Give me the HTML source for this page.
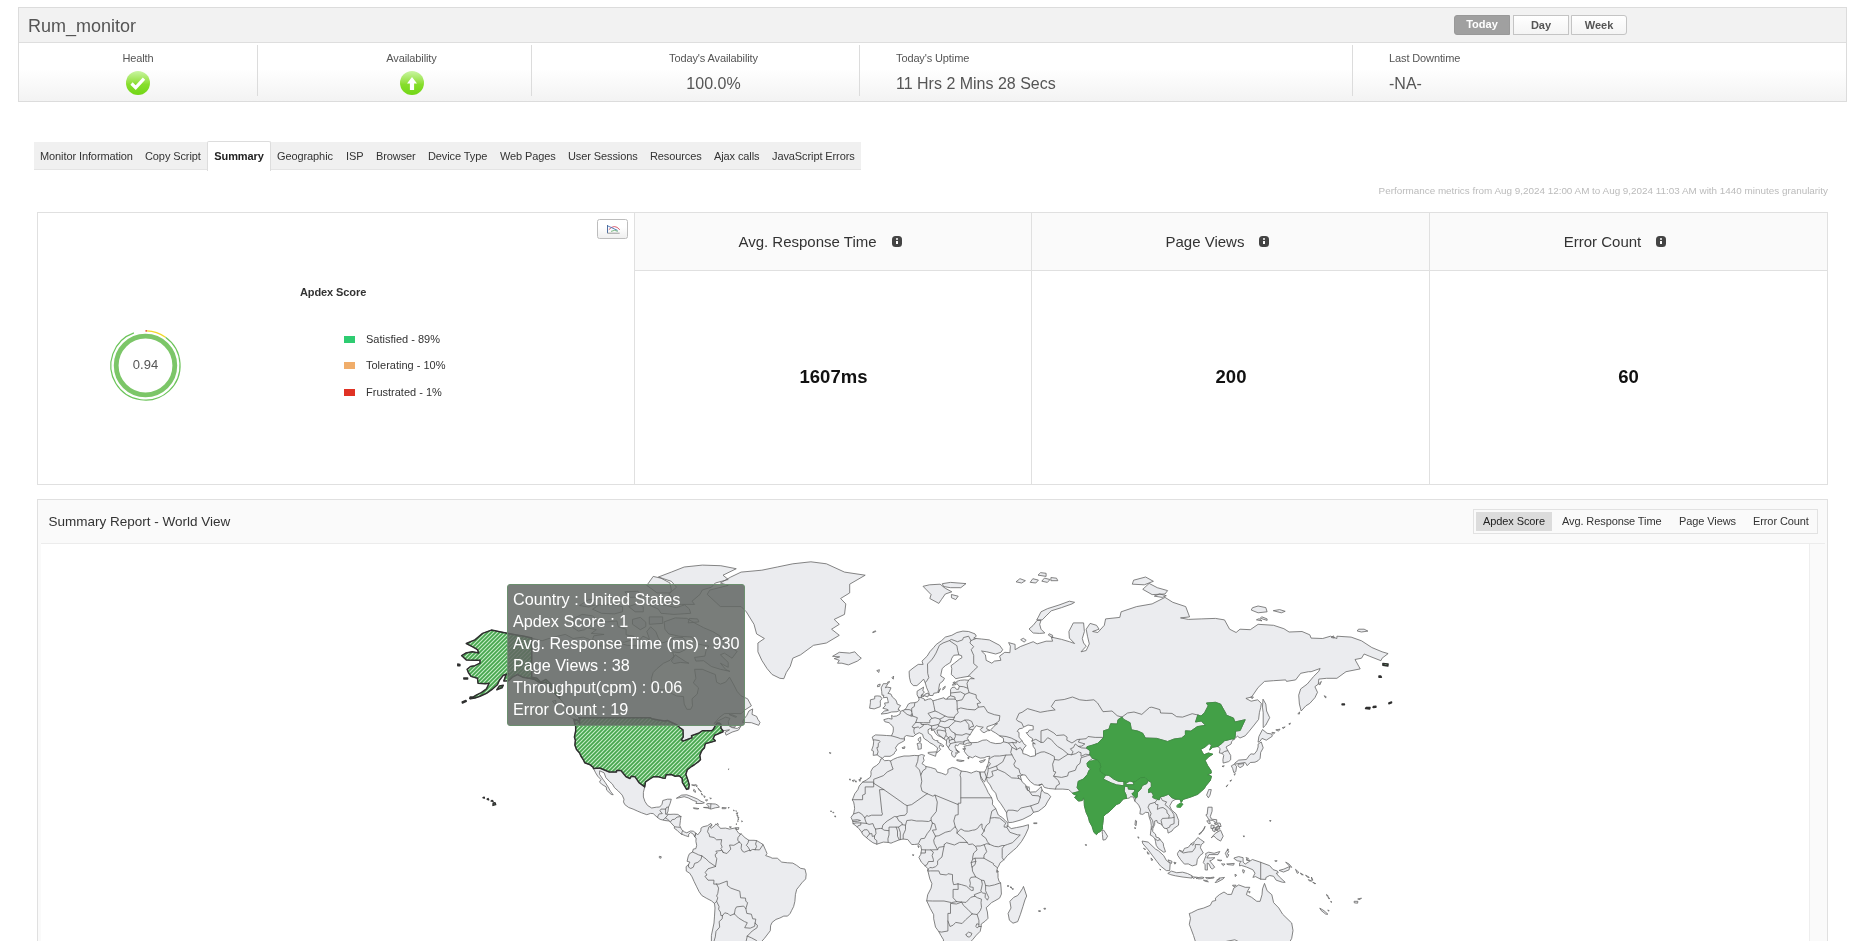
<!DOCTYPE html>
<html lang="en">
<head>
<meta charset="utf-8">
<title>Rum_monitor - Summary</title>
<style>
*{box-sizing:border-box;margin:0;padding:0}
html,body{width:1866px;height:941px;overflow:hidden;background:#fff}
body{font-family:"Liberation Sans",Arial,sans-serif;color:#333;position:relative;font-size:11px}
.abs{position:absolute}
/* top monitor panel */
#mon{left:18px;top:7px;width:1829px;height:95px;border:1px solid #dcdcdc;background:#fff}
#mon .bar{left:0;top:0;width:1827px;height:35px;background:#f2f2f2;border-bottom:1px solid #dedede}
#mon h1{left:9px;top:6px;font-size:18px;font-weight:400;color:#555;line-height:24px;white-space:nowrap}
#mon .stats{left:0;top:35px;width:1827px;height:58px;background:linear-gradient(#fff 0%,#fff 45%,#f3f3f3 100%)}
.stat{top:0;height:58px}
.stat .lb{position:absolute;top:8px;left:0;width:100%;font-size:11px;color:#555;line-height:14px;white-space:nowrap;letter-spacing:-.12px}
.stat .val{position:absolute;top:31px;left:0;width:100%;font-size:16px;color:#555;line-height:20px;white-space:nowrap}
.stat.c{text-align:center}
.vd{top:2px;width:1px;height:51px;background:#dcdcdc}
.btn{top:7px;height:20px;border:1px solid #c4c4c4;background:linear-gradient(#fff,#f4f4f4);font-size:11px;font-weight:700;color:#555;text-align:center;line-height:18px}
.btn.on{background:#a0a0a0;border-color:#999;color:#fff;border-radius:3px 0 0 3px;line-height:17px}
/* tabs */
#tabs{left:34px;top:142px;height:28px;width:827px;background:#f0f0f0;border-bottom:1px solid #e4e4e4}
#tabs span{position:absolute;top:0;height:28px;line-height:28px;font-size:11px;color:#333;white-space:nowrap;letter-spacing:-.1px}
#tabs span.act{background:#fff;border:1px solid #ddd;border-bottom:none;height:30px;top:-1px;font-weight:700;text-align:center;border-radius:2px 2px 0 0;color:#222}
#perf{right:38px;top:185px;font-size:9.9px;color:#bbb;white-space:nowrap;line-height:12px}
/* cards */
#cards{left:37px;top:212px;width:1791px;height:273px;border:1px solid #e0e0e0;background:#fff}
.card{top:0;height:271px;border-left:1px solid #e0e0e0}
.card .hd{position:absolute;left:0;top:0;width:100%;height:58px;background:#fafafa;border-bottom:1px solid #e0e0e0;font-size:15px;color:#333;line-height:58px;text-align:center;white-space:nowrap;padding-right:27px}
.card .num{position:absolute;left:0;top:152px;width:100%;text-align:center;font-size:18.5px;font-weight:700;color:#111;line-height:24px}
.info{display:inline-block;width:10px;height:11px;border-radius:3.5px;background:#444;vertical-align:middle;margin-left:15px;position:relative;top:-2px}
.info i{position:absolute;left:4px;top:2px;width:2px;height:2px;background:#fff;border-radius:1px}
.info b{position:absolute;left:4px;top:5px;width:2px;height:3.5px;background:#fff}
.lg{left:306px;font-size:11px;color:#333;white-space:nowrap;line-height:14px}
.lg i{display:inline-block;width:11px;height:7px;margin-right:11px;vertical-align:middle;position:relative;top:-1px}
/* world panel */
#world{left:37px;top:499px;width:1791px;height:460px;border:1px solid #e0e0e0;background:#fafafa}
#world .ttl{left:10.5px;top:14px;font-size:13.5px;color:#333;line-height:16px;white-space:nowrap}
#world .sep{left:3px;top:43px;width:1784px;height:1px;background:#ececec}
#world .chart{left:3px;top:44px;width:1769px;height:420px;background:#fff;border-right:1px solid #eee}
#tg{left:1435px;top:9px;width:345px;height:25px;border:1px solid #e2e2e2;background:#fafafa}
#tg span{position:absolute;top:2px;height:19px;line-height:19px;font-size:11px;color:#333;white-space:nowrap;text-align:center;letter-spacing:-.1px}
#tg span.on{background:#dcdcdc;color:#222}
#map{left:0;top:0;width:1866px;height:941px}
#tip{left:507px;top:584px;width:238px;height:142px;background:rgba(97,102,99,.85);border:1px solid #6b8f6e;border-radius:3px;color:#fff;font-size:16.2px;line-height:22px;padding:3px 5px 5px;white-space:nowrap}
</style>
</head>
<body>
<div id="root" style="position:absolute;left:0;top:0;width:1866px;height:941px;will-change:transform">
<div id="mon" class="abs">
  <div class="bar abs"></div>
  <h1 class="abs">Rum_monitor</h1>
  <div class="btn on abs" style="left:1435px;width:56px">Today</div>
  <div class="btn abs" style="left:1494px;width:56px">Day</div>
  <div class="btn abs" style="left:1552px;width:56px;border-radius:0 3px 3px 0">Week</div>
  <div class="stats abs">
    <div class="stat c abs" style="left:0;width:238px"><div class="lb">Health</div>
      <svg class="abs" style="left:106px;top:26.5px" width="26" height="26" viewBox="0 0 26 26"><defs><linearGradient id="gg" x1="0" y1="0" x2="0" y2="1"><stop offset="0" stop-color="#c9f5a2"/><stop offset=".5" stop-color="#92e03c"/><stop offset=".55" stop-color="#86de2c"/><stop offset="1" stop-color="#72d615"/></linearGradient></defs><circle cx="13" cy="13" r="12" fill="url(#gg)"/><path d="M6.5 13.5l4.2 4.2 8.3-9" fill="none" stroke="#fff" stroke-width="3.2"/></svg></div>
    <div class="vd abs" style="left:238px"></div>
    <div class="stat c abs" style="left:256px;width:273px"><div class="lb">Availability</div>
      <svg class="abs" style="left:124px;top:26.5px" width="26" height="26" viewBox="0 0 26 26"><circle cx="13" cy="13" r="12" fill="url(#gg)"/><path d="M13 7l5 6.5h-2.9v6.5h-4.2v-6.5H8z" fill="#fff"/></svg></div>
    <div class="vd abs" style="left:512px"></div>
    <div class="stat c abs" style="left:531px;width:327px"><div class="lb">Today's Availability</div><div class="val">100.0%</div></div>
    <div class="vd abs" style="left:840px"></div>
    <div class="stat abs" style="left:877px;width:400px"><div class="lb">Today's Uptime</div><div class="val">11 Hrs 2 Mins 28 Secs</div></div>
    <div class="vd abs" style="left:1333px"></div>
    <div class="stat abs" style="left:1370px;width:300px"><div class="lb">Last Downtime</div><div class="val">-NA-</div></div>
  </div>
</div>

<div id="tabs" class="abs">
  <span style="left:6px">Monitor Information</span>
  <span style="left:111px">Copy Script</span>
  <span class="act" style="left:173px;width:64px">Summary</span>
  <span style="left:243px">Geographic</span>
  <span style="left:312px">ISP</span>
  <span style="left:342px">Browser</span>
  <span style="left:394px">Device Type</span>
  <span style="left:466px">Web Pages</span>
  <span style="left:534px">User Sessions</span>
  <span style="left:616px">Resources</span>
  <span style="left:680px">Ajax calls</span>
  <span style="left:738px">JavaScript Errors</span>
</div>
<div id="perf" class="abs">Performance metrics from Aug 9,2024 12:00 AM to Aug 9,2024 11:03 AM with 1440 minutes granularity</div>

<div id="cards" class="abs">
  <div class="abs" style="left:559px;top:6px;width:31px;height:20px;border:1px solid #bdbdbd;border-radius:2.5px;background:linear-gradient(#fff 40%,#efefef)">
    <svg class="abs" style="left:9px;top:5px;overflow:visible" width="14" height="10" viewBox="0 0 14 10"><path d="M0.5 0v8.2" fill="none" stroke="#3b5f94" stroke-width="1" opacity=".9"/><path d="M0.5 8.2h12.2" fill="none" stroke="#9a9a9a" stroke-width="1"/><path d="M1.8 4.7Q7.4 -1.6 12.8 4.7" fill="none" stroke="#d0435b" stroke-width="1" opacity=".85"/><path d="M1 1L10.5 5.4" fill="none" stroke="#3f6fb5" stroke-width="1" opacity=".85"/><path d="M4 6.4Q7.8 4.2 10.8 6.4" fill="none" stroke="#3e9a4b" stroke-width=".8" opacity=".85"/></svg>
  </div>
  <div class="abs" style="left:262px;top:72px;letter-spacing:-.1px;font-size:11px;font-weight:700;color:#333;line-height:14px;white-space:nowrap">Apdex Score</div>
  <svg class="abs" style="left:60.7px;top:106.7px" width="92" height="92" viewBox="0 0 92 92">
    <circle cx="46.5" cy="45.5" r="29.3" fill="none" stroke="#7cc668" stroke-width="4.8"/>
    <path d="M34.9 12.9A34.6 34.6 0 1 0 66.5 17.3" fill="none" stroke="#6cc45a" stroke-width="1.2"/>
    <path d="M47.7 10.9A34.6 34.6 0 0 1 66.5 17.3" fill="none" stroke="#f0d92c" stroke-width="1.4"/>
    <path d="M46.5 10.9l1.4 0" fill="none" stroke="#e0563a" stroke-width="1.6"/>
    <text x="46.5" y="49.3" text-anchor="middle" font-size="13" fill="#555" font-family="Liberation Sans, Arial, sans-serif">0.94</text>
  </svg>
  <div class="lg abs" style="top:119px"><i style="background:#2ecc71"></i>Satisfied - 89%</div>
  <div class="lg abs" style="top:145px"><i style="background:#f0ad6a"></i>Tolerating - 10%</div>
  <div class="lg abs" style="top:172px"><i style="background:#e03224"></i>Frustrated - 1%</div>

  <div class="card abs" style="left:596px;width:398px"><div class="hd">Avg. Response Time<span class="info"><i></i><b></b></span></div><div class="num">1607ms</div></div>
  <div class="card abs" style="left:993px;width:399px"><div class="hd">Page Views<span class="info"><i></i><b></b></span></div><div class="num">200</div></div>
  <div class="card abs" style="left:1391px;width:398px"><div class="hd">Error Count<span class="info"><i></i><b></b></span></div><div class="num">60</div></div>
</div>

<div id="world" class="abs">
  <div class="ttl abs">Summary Report - World View</div>
  <div id="tg" class="abs">
    <span class="on" style="left:2px;width:76px">Apdex Score</span>
    <span style="left:88px">Avg. Response Time</span>
    <span style="left:205px">Page Views</span>
    <span style="left:279px">Error Count</span>
  </div>
  <div class="sep abs"></div>
  <div class="chart abs"></div>
</div>

<svg id="map" class="abs" viewBox="0 0 1866 941">
  <defs>
    <pattern id="hatch" width="4" height="4" patternUnits="userSpaceOnUse">
      <rect width="4" height="4" fill="#c6edc8"/>
      <path d="M-1,1l2,-2M0,4l4,-4M3,5l2,-2" stroke="#47a64e" stroke-width="1.75" fill="none"/>
    </pattern>
    <clipPath id="mc"><rect x="41" y="544" width="1769" height="400"/></clipPath>
  </defs>
  <g clip-path="url(#mc)" stroke-linejoin="round" stroke-linecap="round">
    <path d="M531.7,638.1L524.0,636.2L513.6,634.4L503.3,632.5L491.4,630.1L482.6,633.4L474.9,639.9L466.3,643.5L472.3,646.6L477.5,649.7L478.7,653.1L472.3,651.8L465.8,653.1L461.7,655.7L466.3,659.9L474.9,660.3L480.0,660.3L480.0,663.2L474.9,665.7L470.5,666.5L467.1,669.3L468.4,672.5L471.0,676.4L477.5,678.3L478.0,683.3L485.2,683.7L489.1,683.3L486.5,688.9L481.3,692.6L476.2,695.2L470.2,698.8L474.9,698.0L480.0,696.2L486.5,693.3L491.7,689.7L497.4,684.8L499.4,680.3L503.3,675.2L508.5,673.7L505.9,675.2L503.8,681.0L508.5,680.7L512.4,677.2L517.5,674.5L522.7,677.2L529.2,678.3L534.8,679.5L540.8,683.3L546.0,682.2L549.8,686.0L553.7,691.5L556.3,695.2L559.4,698.0L562.8,702.3L565.9,706.8L567.9,711.0L573.6,713.4L577.7,716.7L578.8,717.7L579.6,719.4L579.6,723.3L578.3,720.4L573.9,719.7L575.7,726.6L575.7,730.8L574.4,737.1L575.4,740.2L574.9,745.1L576.5,749.4L579.6,753.0L580.9,756.0L583.4,759.8L584.7,762.8L590.2,764.8L593.0,767.1L593.5,768.6L595.6,772.8L597.7,776.2L601.0,779.6L599.5,781.9L601.5,784.1L606.2,786.9L606.7,790.2L611.1,794.3L613.2,794.8L610.6,791.5L608.0,786.9L605.4,782.7L602.8,779.1L599.5,774.3L599.7,770.8L604.1,772.8L605.9,777.7L609.3,781.3L612.4,784.1L614.5,787.7L618.3,791.0L622.2,795.1L624.0,799.2L623.5,801.9L624.8,804.6L628.7,807.5L633.1,809.1L637.7,811.2L641.6,812.8L646.8,814.7L650.6,813.4L653.2,813.6L657.6,817.6L660.2,819.4L664.9,820.5L669.3,821.0L670.5,822.3L674.4,826.5L674.4,828.4L677.0,830.2L680.1,833.3L682.2,834.4L685.5,835.7L688.6,836.7L688.6,834.4L690.7,832.5L693.5,834.4L694.8,837.0L696.1,833.3L693.3,831.2L690.4,831.0L686.8,832.8L684.2,831.8L681.7,829.7L679.8,825.7L680.4,820.5L680.9,816.5L677.8,814.4L673.9,814.2L670.0,814.4L666.7,814.2L668.0,811.2L668.5,807.2L670.0,803.8L671.3,799.2L667.4,799.2L662.8,800.5L662.0,804.3L659.7,807.0L656.3,807.2L651.7,808.0L647.5,805.4L645.0,801.6L643.4,797.0L643.4,792.4L644.7,786.9L645.5,781.9L650.6,778.5L653.2,776.8L658.4,776.8L662.3,777.9L665.1,778.2L666.1,774.8L671.3,774.5L675.2,776.2L679.1,775.7L682.2,778.5L682.4,782.4L684.8,786.3L686.6,789.4L688.6,788.8L689.2,784.7L687.9,780.2L685.8,774.3L687.3,769.7L691.5,766.5L694.6,764.5L697.9,762.2L700.5,759.8L699.8,755.4L701.0,752.4L702.3,750.0L704.4,747.9L704.9,744.8L705.7,743.6L711.4,742.1L715.3,740.8L713.2,738.4L714.7,735.2L717.8,734.0L723.0,731.7L723.0,730.8L729.5,729.8L725.1,732.4L726.1,735.2L732.1,732.1L738.5,730.1L741.1,725.9L737.2,728.5L732.1,727.6L729.0,725.9L728.2,721.7L730.0,718.4L725.6,717.1L717.8,721.0L714.0,723.7L719.1,717.7L724.3,713.7L730.8,713.4L741.1,713.7L745.0,709.9L751.4,705.8L747.6,698.8L741.1,695.9L737.2,691.5L733.4,684.1L729.5,677.2L725.6,682.2L720.4,684.1L716.6,682.2L715.3,674.5L710.1,672.5L702.3,669.3L694.6,669.3L695.9,678.3L693.3,682.9L698.5,687.8L697.2,694.1L692.0,698.8L692.5,705.8L690.7,709.3L686.8,709.3L684.2,704.1L683.5,696.6L676.5,695.9L671.3,693.3L663.6,689.7L656.3,689.7L651.9,682.9L651.4,678.3L653.2,672.5L657.1,668.5L663.6,663.2L670.0,660.3L673.9,656.1L672.6,651.8L679.1,652.7L685.5,649.7L684.2,645.3L686.1,641.2L683.0,637.6L675.2,637.1L668.7,640.8L662.3,643.0L658.4,638.1L655.8,631.5L650.6,626.8L646.8,631.5L649.3,638.5L648.1,644.4L642.9,646.2L627.4,645.3L617.0,642.6L617.0,647.5L611.9,645.7L598.9,646.2L601.5,644.4L593.8,641.2L583.4,637.1L573.1,638.5L565.3,634.4L557.6,636.2L547.2,639.0L542.1,640.8L531.7,638.1ZM696.1,833.3L697.7,834.9L700.8,831.0L701.0,828.1L702.9,826.8L707.5,825.7L710.9,823.4L711.9,825.2L710.4,827.1L711.1,828.4L714.7,825.7L715.8,823.9L719.1,826.5L720.4,828.4L725.6,828.1L729.5,829.1L735.9,827.8L736.5,830.2L739.0,833.6L741.6,834.4L745.0,837.7L748.9,840.3L754.0,840.3L756.6,840.6L760.5,842.9L763.1,844.5L765.7,850.4L767.0,853.5L765.7,855.6L770.8,857.4L772.1,858.2L777.3,858.2L781.7,862.1L787.6,862.8L792.8,863.1L796.7,865.4L800.6,868.3L805.0,869.1L806.2,874.2L805.7,878.9L801.9,882.8L799.3,886.2L796.7,889.4L795.4,894.7L794.9,901.3L793.6,906.6L791.5,910.7L790.2,913.4L787.6,916.1L783.8,916.1L779.9,918.0L776.0,919.4L772.1,922.4L770.6,925.7L770.3,930.7L767.0,935.0L764.4,938.4L761.3,941.8L758.2,946.1L755.3,949.3L750.9,949.6L745.5,947.0L745.2,948.7L748.3,952.8L749.6,955.2L747.6,958.8L735.9,961.8L735.2,966.4L728.2,967.9L732.1,972.5L728.2,975.7L726.9,980.4L721.7,983.6L726.1,988.5L720.4,996.8L717.8,1001.9L719.1,1005.4L712.7,1010.0L704.9,1003.7L701.0,991.8L704.9,983.6L707.5,971.0L705.7,963.3L706.2,956.4L708.8,951.4L711.4,944.1L711.4,935.5L714.0,923.0L714.5,916.1L715.0,908.0L714.5,903.4L711.4,900.8L706.2,898.1L701.8,895.5L699.0,891.5L696.7,886.8L694.1,881.5L692.0,876.8L689.7,873.2L686.3,871.1L686.1,866.7L688.6,864.4L689.9,862.1L687.1,861.3L688.1,856.9L689.4,853.8L692.5,852.0L693.3,849.1L695.9,848.6L696.7,845.3L695.9,841.4L696.1,838.0L694.8,837.0ZM980.5,776.0L981.0,779.1L983.6,783.3L986.2,788.2L988.2,792.6L991.6,797.8L992.6,801.1L992.4,804.3L995.7,808.6L998.3,815.0L1002.7,817.9L1005.8,821.3L1007.6,822.6L1008.1,824.7L1006.8,825.7L1008.1,826.0L1011.2,828.6L1016.4,827.6L1022.9,826.3L1028.5,824.7L1028.3,828.4L1025.4,834.9L1021.6,841.4L1016.4,847.8L1013.3,850.4L1007.3,855.6L1003.7,860.0L1000.1,862.8L998.6,866.2L997.5,867.8L996.5,871.9L998.0,873.7L998.0,877.6L999.1,881.5L1000.6,882.8L1001.1,888.1L1001.4,894.1L999.6,898.1L994.9,900.8L991.6,902.6L988.0,906.1L986.2,907.7L987.4,912.0L988.0,918.3L985.4,921.0L981.2,924.1L981.2,926.5L980.2,931.3L976.3,935.2L972.5,939.8L968.6,943.8L964.7,946.4L962.6,947.0L956.9,947.3L947.9,949.3L944.0,947.9L943.2,943.2L943.5,939.8L940.9,935.5L938.8,931.6L935.5,927.1L933.7,918.8L933.7,914.7L930.3,908.5L926.7,900.8L927.7,894.7L931.1,888.1L931.9,883.6L929.8,878.9L928.0,871.4L927.7,868.5L925.2,865.9L921.3,862.1L918.9,857.4L920.8,854.3L921.5,849.7L920.8,845.8L918.9,844.0L914.3,844.5L911.7,844.5L907.8,839.6L903.2,839.0L899.3,839.8L893.6,842.1L891.0,843.2L888.2,842.4L883.3,842.1L876.8,844.2L872.9,842.7L868.3,839.3L866.5,837.7L862.6,834.4L861.8,832.3L858.7,828.4L857.4,827.1L853.0,823.6L852.8,821.3L851.0,817.3L853.6,813.9L854.6,808.6L854.3,805.4L853.6,801.9L852.3,800.0L854.8,793.7L857.9,789.6L859.2,786.0L862.6,782.1L866.5,779.9L870.4,777.1L871.1,774.3L870.9,771.4L872.9,767.7L876.6,765.4L879.4,762.8L880.9,758.9L882.5,758.7L884.6,760.7L888.4,760.4L890.5,761.0L893.6,759.2L897.5,757.5L904.0,756.0L909.1,756.0L914.3,755.4L918.4,755.7L921.5,754.5L924.6,755.4L923.3,757.8L924.1,760.4L922.0,763.6L924.6,765.4L925.9,766.5L930.3,767.4L935.7,769.1L937.0,772.0L941.4,773.1L945.8,774.8L947.9,772.8L947.9,769.4L952.3,767.4L956.2,768.3L961.3,771.1L966.8,771.7L971.2,773.1L973.7,772.0L976.3,771.1L979.7,772.0ZM882.2,758.1L879.9,756.9L877.1,754.8L873.2,755.4L873.5,751.2L871.6,750.3L873.2,745.8L873.7,741.8L873.2,739.9L872.2,737.1L875.5,734.9L882.0,735.2L886.4,735.5L891.5,735.8L893.1,732.1L893.4,728.9L893.1,726.9L890.5,724.0L889.0,722.7L884.8,721.7L883.8,719.7L888.4,718.4L892.1,719.1L891.5,715.4L893.4,716.4L896.5,716.0L900.1,714.0L900.3,711.3L902.7,710.6L905.0,709.6L906.5,707.5L908.3,704.1L910.4,703.0L914.3,702.7L917.1,702.0L918.4,700.9L919.2,699.1L918.4,697.3L917.1,694.8L917.1,691.2L920.8,688.9L923.6,687.1L922.8,690.8L924.4,691.9L922.6,694.1L921.3,696.2L921.5,697.7L924.4,699.1L924.6,700.5L928.5,699.1L931.1,698.8L932.9,700.9L937.6,699.5L944.0,697.7L944.8,699.1L947.1,699.1L947.9,697.3L950.5,695.9L950.7,693.0L950.5,689.7L952.0,687.5L954.6,687.1L956.4,689.3L958.5,689.3L959.3,686.3L956.9,683.7L956.7,681.4L960.3,680.3L964.7,679.9L968.6,680.3L969.9,678.7L974.3,678.7L971.2,677.6L969.9,676.0L968.1,676.4L960.8,677.6L955.7,678.7L953.6,676.4L951.3,674.5L951.8,668.5L951.0,665.7L954.4,663.2L959.5,659.1L961.9,657.8L961.6,655.7L958.8,654.8L953.8,655.3L951.8,658.2L950.5,662.4L945.3,665.7L942.2,668.5L940.9,674.5L940.7,676.0L944.5,678.3L943.0,681.0L939.6,683.7L938.6,689.7L937.6,692.6L933.7,693.3L932.9,695.5L929.5,695.5L928.8,692.6L926.7,687.8L925.2,682.6L923.6,679.1L920.8,682.2L916.9,685.6L913.3,685.6L910.7,682.6L909.4,677.2L909.1,671.3L913.0,668.1L918.2,664.4L923.1,664.4L922.0,661.1L927.2,656.1L929.8,651.8L933.7,647.5L936.3,644.4L941.4,640.8L945.3,637.1L951.8,635.3L956.9,632.5L962.9,631.1L968.6,631.5L975.0,633.9L976.3,636.2L973.7,638.1L976.1,638.5L981.5,639.0L989.3,639.9L999.6,645.3L1002.7,649.7L1000.9,652.3L995.7,654.0L986.7,651.8L981.5,651.0L985.4,654.8L986.2,660.3L991.8,663.2L994.4,661.1L1000.9,660.3L999.6,656.1L1004.8,652.3L1009.9,652.7L1010.4,646.2L1008.6,642.6L1015.1,644.4L1015.1,649.7L1020.3,646.6L1033.2,641.7L1037.1,643.9L1046.1,641.2L1052.6,641.2L1051.3,637.1L1061.6,639.4L1069.4,641.7L1074.6,643.5L1069.4,638.1L1068.9,631.5L1073.3,622.9L1083.6,622.9L1084.4,631.5L1082.3,638.5L1083.6,643.0L1086.2,646.2L1081.0,651.8L1086.2,650.5L1089.3,643.9L1087.5,636.2L1086.2,629.2L1090.1,623.4L1096.5,625.3L1099.1,629.2L1092.6,631.5L1097.8,632.5L1104.3,625.3L1105.6,618.9L1119.8,617.4L1121.1,611.8L1136.6,606.6L1152.1,603.9L1165.0,597.4L1172.8,602.3L1185.7,606.6L1189.6,616.9L1180.5,617.9L1188.3,619.4L1201.2,618.9L1215.4,618.4L1224.5,619.9L1229.6,629.2L1236.1,632.5L1240.0,629.2L1250.3,629.7L1258.1,624.3L1273.6,625.3L1283.9,628.7L1289.1,632.0L1302.0,631.5L1309.8,634.8L1311.1,638.1L1322.7,638.5L1330.5,636.2L1336.9,638.5L1336.9,636.2L1351.1,637.1L1361.5,640.8L1371.8,647.5L1382.1,651.8L1388.1,653.6L1382.1,658.2L1380.9,660.7L1369.2,656.1L1364.1,654.0L1361.5,658.2L1355.0,659.5L1358.9,666.5L1360.2,668.9L1346.0,671.7L1336.9,678.3L1326.6,678.3L1318.8,679.1L1318.3,684.1L1314.9,686.7L1317.5,692.3L1314.9,697.7L1309.8,703.4L1305.9,705.8L1301.2,711.0L1299.4,704.1L1298.7,695.2L1300.7,688.9L1307.2,684.1L1313.7,676.4L1318.8,671.3L1320.1,668.5L1311.1,671.7L1308.5,671.7L1300.7,673.3L1295.6,679.9L1286.5,681.4L1285.7,679.9L1273.6,680.7L1264.5,681.4L1258.1,687.5L1251.6,697.0L1245.9,698.4L1251.1,701.2L1257.6,699.8L1261.4,703.4L1260.7,707.5L1259.4,712.7L1258.6,719.4L1254.2,725.0L1249.0,731.4L1245.2,735.8L1240.0,738.0L1237.4,736.2L1234.0,739.3L1231.5,741.8L1231.2,743.9L1226.0,747.0L1227.8,750.6L1230.7,755.4L1230.7,759.8L1228.6,761.6L1223.2,763.1L1222.9,759.8L1223.7,755.4L1222.1,753.3L1219.3,753.0L1220.1,748.5L1217.8,746.4L1212.8,747.3L1209.7,750.0L1211.5,744.8L1209.0,743.6L1205.1,747.0L1200.7,749.4L1202.5,752.4L1203.8,754.8L1208.4,753.0L1212.8,754.2L1209.0,756.6L1205.1,760.4L1207.7,765.7L1211.0,770.6L1211.3,773.1L1207.7,774.8L1211.5,776.2L1210.3,780.5L1206.4,785.2L1203.8,789.1L1201.2,791.3L1197.8,794.3L1191.6,796.7L1188.3,797.8L1183.1,799.4L1181.3,802.4L1179.8,799.2L1175.9,799.2L1172.3,801.1L1169.7,805.9L1171.5,809.9L1176.1,813.9L1178.7,820.5L1178.5,825.2L1173.6,828.6L1172.0,831.0L1168.1,833.1L1167.6,829.7L1166.3,828.6L1164.0,828.1L1162.4,825.7L1162.2,825.2L1160.6,823.9L1157.3,822.6L1157.0,820.5L1154.7,821.0L1154.7,824.4L1152.9,828.4L1152.6,831.5L1155.5,834.1L1156.0,837.0L1159.1,838.0L1160.1,839.6L1163.2,843.2L1163.7,846.5L1165.5,851.7L1163.7,852.2L1158.3,848.4L1156.2,845.3L1155.5,841.6L1154.9,838.8L1152.6,836.2L1150.3,835.1L1150.8,831.0L1151.1,829.7L1151.3,825.7L1150.8,821.8L1149.0,816.5L1148.5,812.6L1145.6,812.3L1142.8,814.4L1139.9,813.9L1140.5,809.1L1138.7,805.1L1136.3,802.4L1134.8,801.1L1133.5,797.0L1130.4,796.7L1129.4,798.1L1126.5,798.4L1123.7,798.9L1121.1,801.3L1119.8,803.2L1116.4,804.6L1113.3,807.8L1108.9,812.0L1105.6,814.2L1103.5,816.5L1103.2,820.5L1102.5,825.7L1102.5,828.9L1100.4,831.5L1098.3,832.5L1096.5,834.6L1093.9,832.3L1092.1,826.5L1089.5,821.8L1088.3,817.1L1086.2,812.6L1084.4,805.9L1084.1,800.5L1083.6,797.8L1082.3,800.5L1078.4,801.1L1074.6,797.3L1077.1,795.6L1073.8,794.3L1072.5,793.2L1070.2,791.0L1068.6,789.6L1062.9,789.1L1055.4,789.1L1048.7,788.5L1044.3,787.4L1042.2,784.1L1037.8,785.2L1034.5,784.7L1030.6,781.9L1027.5,778.2L1025.4,775.1L1022.6,774.8L1020.3,776.0L1021.3,779.9L1022.3,782.1L1025.7,784.9L1026.0,788.0L1027.5,790.2L1027.5,788.0L1028.8,786.6L1029.6,789.1L1028.8,790.7L1030.6,792.1L1035.8,791.8L1039.7,788.2L1041.2,786.6L1042.0,789.9L1044.1,792.6L1047.9,793.7L1050.8,796.5L1047.4,801.9L1045.3,805.9L1041.7,808.8L1038.4,811.2L1033.5,812.3L1031.1,815.0L1022.9,819.2L1019.0,820.5L1012.5,822.3L1008.6,822.6L1007.9,821.0L1006.8,816.0L1006.6,812.8L1004.0,808.6L1000.9,803.8L997.5,799.4L995.7,793.2L992.4,789.6L990.0,784.9L987.2,781.3L986.4,777.1L985.1,780.7L984.6,781.9L983.1,780.5L980.5,776.0L979.7,772.0L984.6,772.0L986.4,768.6L986.9,766.8L988.2,763.6L989.0,759.8L989.3,757.8L989.8,756.3L986.7,756.6L984.1,757.8L980.2,758.1L975.3,756.0L972.5,757.8L968.6,756.3L966.8,754.8L964.2,751.2L965.5,748.5L963.9,746.4L967.3,745.5L971.2,744.8L971.4,742.7L977.6,742.4L982.8,740.2L986.7,739.9L990.5,742.4L995.7,743.6L1000.9,743.3L1003.5,741.8L1003.5,738.4L999.6,735.8L995.7,733.0L991.8,730.8L990.8,729.5L993.1,727.6L995.2,725.0L997.5,723.7L994.9,724.0L991.3,725.3L987.2,726.6L986.7,728.9L990.3,730.5L987.4,730.8L984.1,732.7L982.5,732.1L980.2,729.5L983.3,727.2L978.9,726.6L976.3,725.6L973.0,729.8L970.1,734.6L968.3,736.5L967.3,738.7L968.6,740.2L969.1,741.8L971.2,742.7L967.3,743.3L964.7,744.5L963.4,744.2L959.5,743.6L957.7,745.8L955.7,744.8L954.9,747.0L956.4,749.4L958.2,751.8L957.7,753.3L955.7,752.7L956.2,754.2L955.1,756.9L954.1,757.2L952.3,756.0L951.3,753.0L952.5,751.5L949.7,750.0L948.4,747.6L946.3,744.8L946.6,740.8L944.0,739.0L941.4,737.1L937.6,735.5L935.5,733.3L933.7,730.1L931.4,730.5L931.6,728.9L930.1,728.5L928.0,729.8L928.3,733.3L931.4,735.5L932.9,739.0L935.5,740.5L938.1,740.8L937.6,742.1L941.4,743.9L944.0,746.1L942.7,746.7L940.1,744.8L939.1,747.3L940.7,749.4L938.8,751.2L936.8,752.7L937.0,750.6L937.6,747.9L935.7,746.4L933.4,744.5L929.8,742.7L927.7,740.8L924.6,739.0L923.3,737.1L922.6,734.3L919.2,732.7L915.6,734.6L913.3,736.5L910.2,736.2L906.5,735.5L904.2,737.1L904.5,739.0L904.5,740.5L901.9,742.1L898.3,743.9L895.4,747.9L896.7,750.0L894.6,752.4L894.4,753.6L891.3,755.7L890.0,756.3L884.8,756.3ZM729.5,671.3L720.4,669.3L711.4,666.5L703.6,660.7L695.9,661.1L694.6,657.4L704.9,656.1L706.2,649.7L708.8,646.2L697.2,643.9L692.0,637.1L679.1,636.2L668.7,633.9L664.9,629.2L664.1,621.9L675.2,617.9L686.8,618.4L694.6,622.9L703.6,627.7L712.7,631.5L720.4,636.2L723.0,640.8L730.8,647.5L737.2,651.4L732.1,658.2L724.3,653.1L720.4,654.8L728.2,662.4L728.2,667.3L720.4,663.2L725.6,669.3ZM624.8,642.1L633.8,639.4L633.8,636.2L626.1,634.8L626.1,629.2L618.3,626.8L617.0,620.9L606.7,621.9L598.9,619.4L589.9,624.3L588.6,628.2L596.4,629.7L591.2,633.4L604.1,634.4L593.8,635.8L592.5,639.4L596.4,640.8L602.8,642.1L614.5,642.1ZM573.1,627.7L578.3,631.1L584.7,629.7L591.2,624.3L597.7,620.4L592.5,615.9L582.1,614.4L574.4,617.9L571.8,624.3ZM735.9,568.9L723.0,575.2L728.2,579.5L715.3,583.0L711.4,587.2L702.3,590.0L699.8,594.6L692.0,601.2L694.6,604.4L681.7,604.4L664.9,603.9L673.9,598.5L668.7,594.0L676.5,587.2L671.3,581.3L658.4,577.0L671.3,572.1L684.2,567.0L702.3,565.1L720.4,565.7ZM670.0,592.9L657.1,592.9L646.8,585.4L653.2,576.4L661.0,578.2L670.0,583.0L671.3,590.0ZM689.4,609.2L690.7,613.3L673.9,614.4L661.0,613.3L658.4,609.2L646.8,603.9L663.6,605.0L676.5,607.6L684.2,605.0ZM622.2,611.8L614.5,613.9L601.5,613.3L592.5,609.2L598.9,605.0L611.9,604.4L622.2,606.6ZM642.9,611.8L635.1,611.8L628.7,606.6L637.7,603.4L642.9,606.6ZM645.5,626.8L640.3,629.7L632.5,624.3L632.5,619.4L640.3,617.4L645.5,621.9ZM662.3,623.4L649.3,624.3L649.3,616.9L662.3,616.9ZM648.1,642.1L639.0,640.8L642.9,636.2L648.1,638.5ZM688.6,663.2L680.4,662.4L673.9,663.6L671.3,661.1L675.2,654.8L679.1,657.4L685.5,661.6ZM596.4,604.4L588.6,607.1L579.6,605.5L588.6,599.6L596.4,599.0ZM640.3,596.8L630.0,597.4L624.8,591.8L637.7,591.2ZM698.5,621.9L688.1,622.9L689.4,618.4L697.2,618.9ZM742.9,722.4L751.4,722.7L758.7,725.3L760.0,722.4L757.9,719.4L756.6,716.4L752.0,714.4L752.7,708.9L748.9,711.0L746.8,715.4L743.7,719.4ZM729.5,714.7L735.9,717.4L736.7,716.7L732.1,714.7ZM730.3,725.3L735.4,726.3L734.6,727.6L730.8,726.6ZM577.2,719.7L571.8,718.1L564.8,712.0L567.9,711.7L573.1,714.4L576.5,717.7ZM557.1,706.8L552.4,701.2L555.8,700.5L555.8,704.1ZM676.7,798.1L681.7,795.1L686.8,794.8L692.0,796.7L697.2,798.9L701.0,801.3L704.4,802.7L702.3,803.5L695.9,803.5L696.7,801.6L693.3,800.5L688.1,797.8L684.2,796.7L680.4,797.5ZM703.9,807.5L707.5,808.0L710.9,809.1L715.3,807.8L719.4,807.2L717.8,805.1L715.3,804.0L710.9,803.8L707.5,803.5L706.5,804.0L708.3,805.9L709.1,807.0ZM693.8,807.8L699.0,808.6L697.4,809.1L694.1,808.6ZM722.5,807.5L726.4,807.8L725.6,808.7L722.5,808.7ZM694.1,789.6L695.4,790.7L695.4,792.4L693.8,791.3ZM692.0,784.9L695.1,784.9L694.8,785.5ZM695.9,784.7L697.2,785.5L696.7,786.9L696.1,786.0ZM705.7,800.0L707.5,799.7L707.0,800.8ZM736.2,827.8L738.8,827.6L738.5,829.4L736.2,829.4ZM707.5,594.6L720.4,606.6L741.1,606.6L746.3,611.8L754.0,624.3L756.6,633.9L764.4,638.5L757.9,643.0L757.9,651.8L761.8,660.3L767.0,668.5L772.1,674.5L779.9,678.3L783.8,678.7L786.3,672.5L790.2,666.5L792.8,658.2L800.6,654.8L813.5,645.3L826.4,643.0L839.3,635.3L831.6,629.2L839.3,624.3L834.2,619.4L844.5,614.4L845.8,603.9L840.6,598.5L849.7,592.9L849.7,584.2L865.2,575.2L844.5,572.1L826.4,563.8L810.9,561.8L792.8,563.8L777.3,567.0L761.8,570.2L741.1,572.1L730.8,577.0L720.4,583.0L728.2,585.4L710.1,590.0ZM832.9,656.1L839.3,652.3L849.7,653.1L854.8,651.8L858.7,656.1L861.3,658.2L857.4,661.1L848.4,664.9L841.9,663.2L837.5,663.2L839.3,660.3L834.2,658.6L839.3,657.0ZM736.5,813.1L738.0,812.8L737.2,814.0ZM737.2,815.0L737.9,815.2L737.6,816.0ZM738.0,816.9L738.9,817.3L738.5,818.1ZM738.4,819.0L738.8,819.4L738.4,819.8ZM742.0,821.0L742.5,821.4L742.1,821.7ZM736.6,823.9L737.0,824.2L736.6,824.4ZM736.2,810.8L736.7,811.0L736.5,811.2ZM733.7,810.2L734.4,810.6L734.1,810.7ZM728.4,807.6L729.2,807.5L729.0,807.8ZM737.9,820.9L738.3,821.2L738.0,821.4ZM717.6,823.5L718.5,824.3L718.1,824.3ZM729.7,826.9L731.3,826.8L731.0,827.3ZM710.1,798.1L711.4,798.4L710.9,798.6ZM701.6,793.5L702.6,794.8L702.3,795.0ZM697.9,788.2L699.2,789.4L699.4,790.5L699.0,789.4ZM704.1,795.9L705.2,796.5L704.7,797.3ZM700.5,790.7L701.4,791.8L701.0,791.8ZM728.6,769.0L729.1,769.0L728.8,769.3ZM659.7,856.4L661.2,856.6L661.0,858.2L659.7,857.9ZM1023.6,886.8L1026.7,896.0L1024.9,900.0L1022.9,906.6L1020.3,914.7L1017.7,921.6L1013.0,923.2L1009.4,920.2L1008.1,913.4L1011.0,908.0L1009.9,901.3L1013.8,897.3L1017.7,895.5L1020.3,892.0L1022.3,888.9ZM1034.0,822.9L1037.1,822.9L1036.8,823.6L1034.2,823.6ZM1038.9,910.7L1040.4,910.7L1040.4,911.5L1039.1,911.5ZM1044.3,908.3L1045.6,908.3L1045.3,909.3L1044.3,909.1ZM1007.9,885.5L1008.6,885.5L1008.6,886.5L1007.9,886.5ZM1010.4,887.0L1011.5,887.0L1011.5,887.8ZM1012.5,888.6L1013.3,888.6L1013.0,889.4ZM852.5,780.5L854.6,779.9L853.6,781.3ZM855.4,781.0L856.4,781.0L856.1,781.9ZM859.2,779.6L860.5,779.3L860.0,781.0ZM860.5,777.9L861.6,777.9L861.0,778.8ZM849.7,779.1L850.4,779.1L850.2,779.9ZM834.9,816.0L835.7,816.0L835.5,816.8ZM830.8,811.0L831.6,811.0L831.3,811.5ZM833.1,812.3L833.9,812.3L833.6,812.8ZM913.0,854.6L913.8,854.8L913.3,855.6ZM918.2,845.8L919.2,846.0L918.7,847.3ZM997.5,870.6L998.3,871.1L998.0,872.2ZM829.5,752.7L831.1,753.0L830.5,753.3ZM881.5,714.0L887.2,713.4L891.5,712.0L897.0,711.7L899.8,710.3L898.0,709.3L900.6,705.5L897.2,704.1L896.7,702.0L895.7,699.8L892.3,697.0L891.0,694.1L887.9,693.3L889.2,691.9L891.0,687.8L887.2,687.1L885.3,687.8L887.9,683.7L883.3,683.7L881.2,687.8L881.7,691.5L882.0,695.2L883.8,695.2L883.3,697.7L887.2,697.3L887.9,700.5L888.4,702.7L884.6,703.0L885.3,705.8L882.8,708.2L887.9,709.6L888.4,710.3L884.6,711.0ZM879.9,706.8L874.2,708.9L869.6,708.2L870.4,702.7L870.4,699.8L874.7,698.8L874.7,696.2L877.3,695.9L880.4,696.2L882.0,698.8L880.2,700.9L880.4,703.4ZM928.5,752.4L936.5,751.8L935.5,756.3L928.5,753.6ZM917.4,743.6L920.0,742.7L921.3,743.6L921.3,748.8L919.5,749.1L918.2,749.4L917.9,746.4ZM918.7,738.4L920.5,737.1L920.8,740.2L920.0,742.1L918.4,740.5ZM957.2,759.8L959.5,760.1L964.2,760.7L960.8,761.6L957.2,760.7ZM979.7,761.3L982.8,760.4L985.4,759.5L983.8,761.6L981.0,762.5ZM902.4,747.6L905.0,746.7L904.5,748.5L902.9,748.5ZM924.9,695.9L927.7,697.0L928.8,694.4L928.0,693.0L925.2,694.1ZM921.5,696.2L923.9,696.6L923.9,695.2L922.0,694.8ZM943.0,689.7L944.8,688.2L945.3,686.3L943.5,687.5ZM938.6,692.6L939.9,689.7L940.4,688.6L939.1,690.8ZM952.8,685.2L956.2,684.5L955.1,683.3L953.1,684.1ZM953.3,682.9L955.7,682.9L955.1,681.8L953.8,682.2ZM968.1,757.5L969.1,757.2L968.6,758.7ZM956.2,749.7L959.5,752.1L958.8,752.4L956.4,750.6ZM963.1,748.8L965.0,748.5L964.4,749.4ZM877.1,670.5L879.4,669.7L878.9,672.1ZM892.1,677.6L893.6,676.0L893.4,678.7ZM887.7,682.2L889.5,681.4L889.0,682.8ZM878.1,684.8L880.2,684.1L879.7,686.3L877.8,686.7ZM872.9,632.0L875.5,630.8L875.8,631.5L873.2,632.5ZM923.3,586.6L931.1,594.6L929.8,598.5L938.8,603.4L941.4,599.6L945.3,594.0L951.8,591.8L945.3,588.3L940.1,584.2L929.8,584.8ZM942.7,583.6L950.5,582.4L966.0,583.6L960.8,587.7L950.5,587.7L944.0,586.6ZM951.8,594.6L958.2,596.2L955.7,599.6L951.8,597.9ZM1029.3,629.2L1033.2,633.0L1039.7,633.4L1044.8,633.0L1041.0,629.2L1039.7,624.3L1041.0,620.4L1037.1,620.4L1033.2,625.3ZM1037.1,619.9L1042.2,619.9L1046.1,615.9L1051.3,610.8L1061.6,607.6L1072.0,603.9L1074.6,602.3L1069.4,601.2L1059.0,605.0L1047.4,608.7L1041.0,611.8L1038.4,616.9ZM1021.0,639.9L1024.1,642.1L1026.2,640.3L1023.6,638.5ZM1048.7,635.3L1052.6,637.6L1052.6,635.3L1049.5,633.9ZM1016.4,581.9L1021.6,583.0L1025.4,580.7L1020.3,578.8ZM1030.6,582.4L1035.8,583.0L1038.4,580.1L1033.2,578.8ZM1042.2,581.3L1047.4,582.4L1050.0,579.5L1044.8,578.2ZM1051.3,580.7L1057.8,580.7L1056.5,578.2L1051.3,577.6ZM1038.4,575.2L1046.1,576.4L1046.1,573.3L1041.0,572.7ZM1143.1,589.5L1152.1,594.6L1165.0,594.0L1167.6,590.6L1157.3,587.7L1149.5,583.6ZM1132.7,584.2L1144.3,584.8L1153.4,581.3L1145.6,577.0L1134.0,580.1ZM1154.7,596.2L1162.4,597.4L1166.3,595.7L1159.9,594.0ZM1251.6,610.2L1258.1,612.8L1267.1,611.8L1265.8,607.6L1258.1,606.0L1252.9,607.6ZM1260.7,618.4L1267.1,620.4L1267.1,618.9L1262.0,616.9ZM1273.6,610.8L1281.3,612.8L1285.2,611.3L1280.0,609.7ZM1256.8,619.9L1262.0,620.9L1259.4,618.9ZM1357.6,631.1L1361.5,632.0L1367.9,631.1L1364.1,629.2L1358.9,629.2ZM1331.7,637.6L1334.3,638.1L1333.6,636.2ZM1318.8,683.7L1321.4,681.4L1320.1,684.5ZM1251.1,697.0L1253.4,697.0L1252.4,698.4ZM1324.5,695.9L1326.1,696.6L1325.8,697.7ZM1263.2,699.5L1265.8,704.1L1266.6,711.0L1269.7,717.7L1265.8,725.0L1263.2,727.6L1263.2,721.0L1263.2,712.7L1262.5,707.5ZM1258.1,741.8L1258.9,736.5L1262.5,729.5L1267.1,733.3L1271.8,734.0L1272.3,736.2L1266.3,740.2L1262.0,738.4L1260.1,741.1ZM1261.4,742.4L1263.2,747.9L1260.7,752.4L1260.1,758.4L1258.1,760.7L1255.0,762.2L1250.3,762.5L1247.2,765.7L1245.2,762.5L1240.0,763.3L1234.8,764.2L1234.8,763.1L1238.7,760.1L1246.4,759.5L1249.8,754.8L1251.1,753.9L1254.2,754.2L1256.8,750.9L1258.1,747.0L1258.1,744.5ZM1234.6,764.5L1236.6,766.2L1235.8,771.7L1233.8,772.6L1232.7,768.6L1231.5,766.2ZM1238.7,764.2L1243.9,763.6L1243.3,765.7L1240.0,767.7L1238.2,766.0ZM1272.3,732.4L1274.9,732.7L1273.6,734.0ZM1276.2,729.8L1280.0,729.2L1278.8,730.8ZM1282.6,727.6L1285.2,726.9L1283.9,728.2ZM1289.1,723.7L1290.4,723.0L1289.9,724.3ZM1298.1,713.4L1299.7,712.0L1299.4,713.7ZM1226.3,786.6L1227.8,784.7L1227.1,786.0ZM1230.2,780.7L1231.5,779.9L1230.9,781.0ZM1234.3,774.5L1235.1,773.4L1234.8,774.8ZM1222.4,766.2L1224.2,765.7L1223.7,766.5ZM1209.0,789.6L1211.3,789.6L1210.0,795.1L1208.4,797.8L1206.6,795.1L1208.2,791.0ZM1102.5,830.5L1103.8,830.2L1107.6,836.2L1105.6,839.6L1103.0,840.1L1102.5,834.9ZM1135.8,820.5L1136.6,821.0L1136.1,825.7L1135.3,825.2ZM1135.0,827.6L1135.6,827.8L1135.3,828.6ZM1138.1,837.0L1138.9,837.2L1138.7,838.0ZM1085.7,844.5L1086.4,844.5L1086.2,845.5ZM1026.5,786.3L1027.3,786.3L1027.0,787.4ZM1039.1,785.2L1041.7,784.1L1041.5,784.4L1039.4,785.5ZM1207.2,813.9L1207.9,807.2L1212.1,807.2L1212.1,811.2L1210.3,816.5L1211.5,819.2L1216.7,819.7L1216.7,823.1L1212.8,820.5L1209.0,820.0L1207.9,817.9L1206.1,815.2ZM1211.5,837.5L1215.4,833.3L1220.6,830.2L1223.2,836.2L1220.6,841.1L1216.7,838.8L1214.1,836.2ZM1217.5,823.1L1220.1,823.1L1221.1,826.5L1219.3,826.5ZM1217.8,826.0L1219.3,826.5L1219.8,829.1L1218.8,829.1ZM1212.6,828.4L1215.4,827.3L1214.9,831.8L1213.1,831.0ZM1211.5,825.0L1214.4,825.7L1213.1,828.4L1211.3,828.4ZM1215.4,829.7L1216.7,826.5L1217.0,828.4ZM1207.2,820.8L1209.5,820.8L1210.3,823.6L1209.0,823.6ZM1199.1,833.8L1202.5,831.0L1205.1,826.3L1204.3,828.9L1200.2,834.1ZM1216.2,829.9L1218.0,829.4L1217.8,830.7ZM1214.7,823.1L1216.7,824.4L1215.7,824.7ZM1177.7,853.0L1179.5,850.4L1183.1,851.5L1184.4,848.4L1188.3,847.3L1190.9,844.0L1194.7,841.4L1197.8,837.5L1200.4,839.3L1204.3,842.1L1201.2,844.7L1200.4,847.8L1203.3,853.0L1199.9,855.6L1197.3,859.5L1196.6,864.7L1192.2,865.9L1188.3,863.9L1184.4,864.1L1180.5,859.5L1177.9,855.6ZM1142.5,841.1L1148.2,842.1L1155.5,849.1L1158.6,850.9L1163.7,855.6L1166.3,860.3L1170.2,863.4L1169.7,870.6L1166.3,870.6L1160.4,865.9L1156.8,861.3L1152.1,855.1L1148.2,849.9L1143.1,844.0ZM1168.1,873.2L1171.5,871.1L1176.7,872.7L1182.6,872.2L1187.5,873.5L1192.2,875.8L1191.9,878.1L1183.1,877.1L1175.4,875.8L1171.2,874.8ZM1192.2,876.8L1195.3,877.1L1194.0,878.4ZM1195.8,877.1L1197.8,877.4L1197.1,878.7ZM1198.1,877.6L1202.0,877.1L1204.1,877.6L1202.2,878.7L1198.6,878.9ZM1205.9,877.6L1210.3,877.6L1214.1,877.1L1213.6,878.1L1207.7,878.7ZM1203.8,880.2L1206.9,880.5L1208.4,881.8L1205.9,881.5ZM1215.4,882.3L1219.3,878.1L1224.5,877.4L1223.2,878.9L1218.0,881.8ZM1205.9,853.5L1208.7,852.2L1214.1,853.3L1219.8,851.5L1218.0,854.6L1209.0,854.6L1206.9,857.9L1210.3,857.9L1214.9,857.7L1211.5,860.3L1209.7,860.8L1212.8,864.7L1214.7,867.2L1212.1,869.1L1210.8,868.0L1209.0,863.9L1207.2,863.1L1207.4,870.1L1205.1,869.8L1205.1,864.7L1203.3,862.6L1205.9,855.9ZM1225.5,853.0L1227.1,850.2L1228.9,851.7L1227.1,853.8L1228.9,854.8L1227.1,857.7L1226.3,855.6ZM1227.1,863.9L1234.3,863.4L1233.5,865.2L1228.4,864.7ZM1221.9,863.9L1225.0,864.1L1223.7,865.4ZM1168.4,860.0L1172.0,861.3L1171.5,863.4L1169.7,862.6ZM1174.3,862.3L1176.1,862.8L1175.1,863.9ZM1147.4,852.0L1149.3,853.8L1148.2,854.0ZM1151.3,858.2L1152.9,860.0L1151.8,860.3ZM1143.8,848.4L1145.6,849.4L1144.9,849.4ZM1160.1,869.3L1160.9,869.8L1160.4,869.8ZM1243.1,869.8L1244.6,870.6L1243.6,873.2L1242.8,871.6ZM1235.3,874.5L1236.6,875.0L1235.6,876.3ZM1246.4,857.7L1248.5,858.4L1247.7,859.0ZM1246.4,859.7L1249.8,860.3L1248.3,860.5ZM1227.6,849.1L1228.6,849.4L1228.1,850.4ZM1217.8,860.0L1221.9,860.3L1220.6,860.8ZM1234.3,857.9L1238.7,856.6L1243.1,857.7L1243.1,862.1L1245.2,864.1L1252.4,859.5L1260.7,862.3L1269.7,865.7L1273.1,869.6L1277.5,871.1L1278.2,872.9L1276.2,873.2L1279.3,876.8L1285.2,882.3L1282.6,882.3L1276.2,880.2L1273.6,876.3L1269.7,875.5L1265.8,877.6L1265.8,879.4L1260.7,879.2L1255.5,876.6L1252.9,877.4L1255.0,873.2L1252.9,869.8L1246.4,867.0L1241.3,865.4L1239.5,865.9L1239.7,862.8L1241.3,861.5L1237.4,860.8L1234.8,859.2ZM1279.5,870.3L1283.9,869.1L1289.6,866.5L1289.1,869.8L1283.9,871.9ZM1286.0,862.3L1289.1,864.1L1291.7,867.2L1290.9,867.5L1287.8,864.4ZM1295.8,869.6L1298.9,872.4L1297.6,873.2ZM1275.1,860.8L1277.2,860.8L1276.2,861.3ZM1300.7,873.2L1303.3,874.8L1302.0,874.8ZM1305.9,875.3L1309.3,877.4L1308.0,877.4ZM1308.7,879.7L1311.8,881.0L1309.8,881.0ZM1311.6,877.4L1312.9,880.2L1312.4,880.2ZM1313.1,882.3L1315.7,883.6L1314.4,883.6ZM1326.8,894.7L1328.4,896.2L1327.4,896.2ZM1328.4,897.3L1329.9,898.6L1328.9,898.6ZM1331.0,901.6L1332.0,902.1L1331.2,902.1ZM1320.1,908.3L1324.0,910.7L1327.9,914.2L1325.8,914.2L1321.4,910.7ZM1354.5,901.3L1357.9,901.3L1357.6,903.2L1354.7,902.9ZM1358.1,898.9L1361.5,898.1L1360.2,899.4ZM1328.4,910.1L1329.2,910.9L1328.4,910.9ZM1270.0,820.5L1271.0,820.5L1270.5,821.3ZM1243.6,835.9L1244.4,835.9L1244.1,836.7ZM1189.6,913.4L1191.4,912.8L1197.8,909.6L1203.8,908.0L1210.3,905.3L1212.3,901.3L1215.7,900.5L1215.4,898.1L1219.3,894.7L1224.0,892.0L1227.6,894.4L1231.5,894.4L1233.8,888.1L1238.7,884.9L1245.2,887.3L1249.8,887.3L1247.7,890.7L1246.4,894.7L1251.6,897.3L1256.8,901.3L1260.1,901.3L1262.0,894.7L1262.5,888.9L1264.5,883.4L1267.1,890.7L1271.8,894.7L1273.6,902.6L1278.8,908.0L1282.6,914.2L1286.0,917.5L1291.7,923.0L1293.0,930.5L1291.7,938.4L1287.3,946.4L1283.9,957.3L1274.9,961.8L1269.7,959.4L1259.4,958.8L1252.9,951.7L1247.7,949.3L1246.4,949.0L1242.6,943.5L1234.8,939.8L1227.1,941.2L1216.7,944.1L1206.4,947.0L1200.7,950.2L1193.7,947.9L1195.3,941.2L1193.5,935.5L1190.9,928.5L1189.3,924.3L1190.4,918.8ZM1233.0,885.2L1236.1,885.2L1234.8,886.5L1233.3,886.2ZM1249.0,891.5L1250.3,892.0L1249.5,892.8Z" fill="#ebecef" stroke="#666" stroke-width="0.8"/>
    <path d="M1024.1,726.9L1028.0,725.0L1033.2,725.9L1033.2,729.8L1029.3,730.1L1028.0,732.4L1026.2,732.7L1029.3,736.5L1032.7,738.7L1031.9,741.5L1035.3,743.9L1032.7,743.3L1033.2,746.4L1035.3,749.4L1035.5,754.5L1035.5,755.7L1030.6,756.6L1026.2,754.5L1022.9,753.6L1022.6,751.2L1023.4,748.8L1026.2,745.5L1024.1,744.2L1021.8,740.5L1019.0,737.1L1019.0,732.4L1017.2,731.4L1019.0,728.9L1022.1,728.2Z" fill="#fff" stroke="#666" stroke-width="0.8"/>
    <path d="M657.6,817.6L657.9,816.0L659.2,813.9L662.3,813.6L659.9,810.7L661.0,809.1L665.6,809.1M665.6,809.1L666.7,807.2L668.5,807.2M665.6,809.1L665.6,814.2L666.4,814.2M668.0,814.7L665.4,817.9L663.3,819.7M665.4,817.9L667.4,819.2L669.3,820.8M670.5,821.8L672.1,819.7L674.7,819.2L677.0,817.1L681.1,816.5M674.7,826.8L677.3,827.1L679.8,827.3M681.9,834.6L681.9,832.3L682.7,830.7M710.9,803.8L710.6,808.6M559.4,698.0L560.2,693.3L555.0,689.7L551.1,684.1L546.0,679.5L540.8,682.2L536.9,678.3L531.7,677.2L531.7,638.1M578.8,717.7L650.1,717.7L651.7,718.7L658.4,720.0L664.9,721.0L667.4,720.4L677.0,725.0L680.4,728.2L683.0,729.8L683.2,737.1L681.4,739.6L683.0,741.1L692.0,737.7L691.5,735.8L698.5,733.3L702.3,730.8L711.4,730.8L713.2,729.5L715.3,725.9L717.3,723.0L719.7,723.3L720.9,724.3L720.9,728.2L723.0,730.8M593.5,768.6L599.7,768.0L609.3,772.0L616.5,772.0L616.5,770.6L620.9,770.6L626.1,776.8L630.0,778.5L631.3,776.2L635.1,776.8L639.0,782.7L644.7,786.9M711.9,825.0L708.8,827.1L707.5,831.8L709.1,834.1L709.6,836.7L714.0,837.5L716.6,839.8L721.7,839.6L720.9,844.0L722.2,847.1L720.9,848.4L723.3,852.5M723.3,852.5L721.7,850.4L715.8,851.2L717.3,853.0L715.3,854.3L715.3,856.1L716.8,858.7L715.5,866.5M715.5,866.5L714.0,865.4L708.8,861.8L706.2,859.0L701.8,855.9M701.8,855.9L698.5,854.8L695.9,853.5L692.5,852.0M701.8,855.9L701.0,859.5L697.9,862.3L694.6,863.4L693.3,867.2L690.7,868.5L688.4,867.0L688.6,864.4M715.5,866.5L708.0,868.8L705.2,872.4L707.0,875.0L704.9,876.3L708.0,880.2L714.0,880.2L713.7,884.1L716.6,884.1M716.6,884.1L718.6,888.1L717.8,893.3L716.6,896.0L717.8,897.8L716.6,901.3L714.5,903.4M716.6,884.1L719.1,884.1L727.2,881.0L727.4,885.5L730.8,888.1L735.9,889.9L739.8,891.2L740.6,897.8L745.5,898.1L745.8,901.3L747.6,902.6L746.3,907.4L745.8,908.5M745.8,908.5L743.7,906.1L736.5,906.9L735.2,909.3L734.4,913.9M734.4,913.9L730.0,915.6L728.2,913.7L724.8,912.8L722.5,915.6M716.6,901.3L719.1,906.6L718.6,909.3L720.4,912.0L720.9,915.6L722.5,915.6M722.5,915.6L722.2,918.8L719.1,921.6L719.7,927.1L716.0,931.3L715.3,936.9L714.0,941.2L715.3,945.5L714.0,952.8M745.8,908.5L746.8,913.4L751.4,914.2L752.7,918.8L755.8,919.1L755.1,923.2M734.4,913.9L738.5,918.0L744.5,921.6L747.3,922.7L744.7,927.7L750.2,928.2L754.6,926.3L755.1,923.2M755.1,923.2L757.4,925.2L757.1,927.7L752.2,931.0L747.3,936.1M747.3,936.1L751.4,937.8L756.6,940.6L758.7,943.5L758.2,946.1M747.3,936.1L745.8,942.6L745.2,947.0M741.1,833.6L738.0,837.5L737.7,840.1L739.3,842.1M739.3,842.1L733.9,845.3L729.5,845.0L730.8,849.1L726.9,853.5L723.3,852.5M739.3,842.1L741.6,844.0L741.1,848.4L742.4,851.2L744.2,852.2L748.9,850.4L750.2,850.7M748.6,840.3L748.1,842.7L746.3,845.3L748.1,847.1L750.2,850.7M750.2,850.7L752.7,849.4L755.1,849.7M756.6,840.6L755.6,844.0L756.6,846.5L755.1,849.7M755.1,849.7L759.5,849.9L762.6,845.3L762.8,844.5M890.5,761.0L891.8,765.7L893.1,769.1L887.2,772.0L883.3,775.7L873.7,779.3L873.7,782.1M862.6,782.1L873.7,782.1L873.7,783.3M873.7,783.3L873.7,786.9L865.2,786.9L865.2,794.0L862.6,795.1L862.6,799.7L852.3,799.7M873.7,783.3L883.8,789.6M883.8,789.6L879.5,789.7L882.0,813.1L882.5,813.4L882.0,815.2L871.6,815.2L868.5,816.3L866.7,815.5L865.7,817.1L864.7,817.6M853.6,813.9L858.7,812.3L861.6,813.9L863.1,815.7L864.7,817.6M864.7,817.6L865.2,820.0L866.5,823.4M866.5,823.4L860.8,822.9L856.1,822.9L853.0,823.6M852.8,820.2L857.4,819.7L860.5,820.5L857.4,821.3L852.8,821.5M860.8,822.9L860.8,825.0L858.2,825.7L857.4,827.1M861.8,832.3L863.9,829.9L867.2,829.7L868.8,831.8L869.6,833.8L866.5,837.7M869.6,833.8L871.9,833.6L872.2,836.4L874.5,835.9L874.5,838.8L876.8,840.6L876.8,844.2M874.5,835.9L876.0,833.6L875.5,829.1M875.5,829.1L874.2,827.1L872.9,823.6L869.1,824.4L866.5,823.4M875.5,829.1L880.2,828.4L882.0,828.6L884.1,830.2L889.0,830.7L889.0,834.9L887.9,838.8L888.2,842.4M889.0,830.7L889.0,827.1L896.2,827.1L897.5,831.0L897.5,836.2L899.3,839.8M896.2,827.1L898.5,827.1L900.3,832.3L900.3,839.6M898.5,827.1L901.9,824.7L902.4,824.7L905.5,825.2L905.5,829.7L903.2,834.9L903.2,839.0M882.0,828.6L882.8,825.2L884.8,823.1L887.2,821.0L891.0,818.7L894.4,816.5L896.7,816.8L898.8,820.8L901.9,822.9L902.4,824.7M896.7,816.8L899.8,815.7L905.2,815.2L907.1,812.6L907.1,805.6M883.8,789.6L900.9,801.6L904.5,804.3L907.1,805.6L911.7,804.6L927.2,793.7M927.2,793.7L922.0,791.0L920.8,786.0L921.8,781.3L920.8,775.1L919.5,770.0L915.8,766.2L917.7,761.3L918.4,755.7M920.8,775.1L922.8,770.8L925.9,768.6L925.9,766.5M927.2,793.7L932.9,796.2L935.0,795.1L958.2,804.6L958.2,803.2L960.8,803.2L960.8,797.8L960.8,777.9L960.0,775.1L961.3,771.1M960.8,797.8L991.6,797.8M935.0,795.1L937.3,802.1L936.3,811.5L931.1,817.9L931.1,820.2M905.5,825.2L906.8,820.5L911.7,820.0L916.4,821.0L922.0,821.0L928.5,821.5L931.1,820.2L932.4,823.1M932.4,823.1L930.3,829.7L927.2,833.6L924.6,838.3L920.8,838.8L918.9,842.7L918.4,843.4M932.4,823.1L934.7,823.9L936.3,829.7L932.4,830.2L935.5,836.2M935.5,836.2L933.7,840.1L934.2,843.2L937.6,849.7L930.6,849.9L925.4,849.9L921.5,849.7M925.4,849.9L925.4,853.0L921.0,853.0M930.6,849.9L933.4,852.2L932.1,855.6L933.4,859.5L933.4,861.5L928.5,861.5L927.0,864.7L924.9,865.7M937.6,849.7L938.8,847.3L944.0,846.5M944.3,844.5L944.0,846.5L942.7,853.0L942.0,856.9L937.6,860.8L937.6,864.7L935.5,866.7L932.4,867.8L929.8,867.5L928.8,868.5L927.7,870.6M928.0,871.1L930.6,870.9L938.8,870.9L940.1,874.2L946.6,875.0L947.9,873.7L952.5,874.5L952.5,880.2L953.6,884.7L958.0,883.9M958.0,883.9L958.2,889.4L953.1,889.4L953.1,897.8L956.7,901.6M944.3,844.5L946.6,842.7L954.4,845.0L959.5,842.4L967.0,842.4M935.5,836.2L938.8,835.7L945.3,832.3L950.5,831.0L954.4,827.3L955.4,827.1M955.4,827.1L957.2,829.9L956.9,833.1L961.3,836.7L964.4,839.3L967.0,842.4M958.2,804.6L958.2,814.7L955.4,815.2L953.8,821.0L955.4,827.1M956.9,833.1L960.8,828.9L964.7,831.0L968.6,831.2L972.5,830.2L975.0,829.9L977.6,828.4L979.9,825.2L982.0,823.9L982.0,827.8L984.1,831.0M984.1,831.0L984.9,828.1L986.7,825.0L989.5,822.9L990.3,818.1L991.8,811.2L995.7,808.6M990.3,818.1L994.4,817.6L999.6,818.1L1005.8,823.1L1004.2,825.7L1004.2,827.1L1006.8,827.1L1008.1,826.0M1006.8,827.3L1009.9,832.3L1017.7,834.9L1020.3,834.9L1012.5,842.7L1007.3,844.5L1004.5,845.5M984.1,831.0L981.5,834.9L985.9,838.3L987.4,841.6L989.3,844.2M989.3,844.2L994.4,846.3L998.3,846.8L1002.2,845.5L1004.5,845.5L1002.2,848.4L1002.2,855.6L1002.2,857.7L1003.7,860.0M989.3,844.2L986.7,843.7L984.1,844.7L980.2,846.0L976.3,846.0L975.8,846.5L972.5,844.0L968.6,844.5L967.0,842.4M975.8,846.5L977.1,849.9L973.7,853.0L972.7,856.9L972.7,859.2L971.2,862.6L971.9,867.0M984.1,844.7L985.4,847.8L986.7,851.7L984.1,855.1L983.8,858.2L993.6,863.6L993.4,864.7L997.5,867.8M983.8,858.2L975.0,858.2L972.7,859.2M975.0,858.2L975.8,861.5L975.0,864.7L972.2,867.0M971.2,862.6L973.7,861.8L975.8,861.5M972.2,867.0L972.5,871.1L975.6,876.8M975.6,876.8L970.9,877.4L969.6,879.7L970.4,883.4L969.6,886.8L973.2,887.3L973.2,890.4L971.2,890.4L966.5,886.2L961.6,884.7L958.0,883.9M975.6,876.8L980.2,879.4L981.5,880.2L984.1,880.5L985.6,885.5L989.3,886.0L994.4,884.9L1000.6,882.8M981.5,880.2L982.3,884.1L981.5,888.1L980.7,891.0L982.8,893.1L985.4,893.3L985.1,897.3L987.4,900.2L988.7,897.3L986.7,893.3L985.6,890.7L985.6,885.5M981.2,892.0L974.3,894.7L974.8,896.2M974.8,896.2L970.9,897.3L966.0,902.4L961.6,902.1L956.7,901.6M926.7,900.8L932.4,901.0L944.0,901.0L951.5,902.6L956.7,901.6M961.6,902.1L956.4,904.0L950.5,903.4L950.5,913.4L947.9,913.4L947.9,921.0L947.9,931.0L941.4,932.1L938.8,931.6M947.9,921.0L950.0,926.5L953.1,925.2L955.7,922.4L962.1,923.5L965.7,919.7L972.2,913.9M972.2,913.9L967.8,909.3L963.4,905.3L961.6,902.1M972.2,913.9L977.1,914.5L980.2,910.7L981.5,907.4L981.0,902.6L981.5,899.2L977.6,897.8L974.8,896.2M977.1,914.5L978.9,920.2L978.9,924.3L976.8,923.8L975.8,926.3L977.1,927.9L978.9,926.5L981.2,926.5M978.9,924.3L978.9,926.5M966.0,934.4L968.6,932.1L971.9,933.3L971.2,935.5L969.1,937.2L967.0,936.4L966.0,934.4M984.6,772.0L986.4,777.1M873.2,739.9L875.0,739.9L879.1,740.5L880.2,741.5L878.4,743.3L878.1,747.3L876.8,747.6L878.1,751.8L877.1,754.8M891.5,735.8L898.0,737.7L900.6,738.7L904.5,739.0M902.7,710.6L907.1,714.4L911.2,716.0L912.7,716.0L917.4,717.7L915.8,722.4M905.0,709.6L909.1,709.6L911.2,710.3L911.7,711.7L912.2,714.0L912.7,716.0M911.2,716.0L911.2,714.0L912.2,714.0M915.8,722.4L912.0,726.9L914.3,727.9L913.8,730.5L914.3,733.3L915.6,734.6M914.3,727.9L918.2,726.9L919.5,728.2L923.1,725.9L923.3,724.6M915.8,722.4L921.0,722.7L921.0,724.3L923.3,724.6M914.8,703.0L914.3,706.5L911.7,708.2L911.7,711.7M918.4,697.3L921.5,697.7M932.9,700.9L933.9,705.5L935.0,711.0L928.0,713.4L931.9,718.4L929.8,720.0L929.8,722.7L923.3,722.7L921.0,722.7M923.3,724.6L927.7,724.3L931.6,725.9L931.6,728.9M931.9,718.4L935.0,717.7L939.9,719.1L940.4,721.0L938.8,724.3L937.8,724.6L931.6,725.9M931.4,729.2L935.7,729.2L938.8,725.9L937.8,724.6M938.8,725.9L944.8,727.9L945.8,730.8L945.3,731.1L940.1,730.1L937.0,730.1L937.6,733.3L941.4,737.1L944.0,738.7M945.3,731.1L946.3,734.0L945.8,735.5L944.0,738.7M945.8,735.5L948.7,737.7L947.4,738.7L946.3,740.5M948.7,737.7L949.4,740.5L949.2,742.4L950.5,743.6L948.4,747.6M950.5,743.6L955.4,742.4L959.5,741.8L963.7,742.1L964.2,741.1L963.4,744.2M964.2,741.1L967.3,740.2L968.6,740.2M955.4,742.4L954.1,739.3L951.8,739.6L949.4,740.5M948.7,737.7L950.0,736.5L952.3,738.0L951.8,739.6M954.1,739.3L955.4,736.5L954.9,733.3L951.5,731.4L948.7,727.2L944.8,727.9M954.9,733.3L955.7,734.6L962.1,735.2L966.0,733.6L970.1,734.6M948.7,727.2L951.8,724.3L955.4,721.0L960.6,722.0L965.0,720.0L968.8,724.6L969.1,729.2L973.0,729.8M965.0,720.0L968.6,720.0L971.7,721.4L973.7,726.3L970.9,726.9L969.1,729.2M940.4,721.0L944.8,721.7L949.2,719.4L953.3,719.7L955.4,721.0M939.9,719.1L942.7,717.7L945.1,716.0L947.9,717.1L954.4,717.4L953.3,719.7M935.0,711.0L938.3,712.3L940.1,713.4L945.1,716.0M954.4,717.4L954.9,715.7L958.2,712.7L957.2,709.3L957.2,705.8L956.9,700.9L955.1,699.1L947.1,699.1M955.1,699.1L954.9,697.0L951.0,695.9M956.9,700.9L962.1,699.8L965.0,694.4L960.6,691.9L950.7,693.0M965.0,694.4L969.1,692.6L967.8,688.2L963.4,686.7L959.3,686.3M967.8,688.2L967.0,683.3L968.6,680.3M969.1,692.6L976.1,694.8L976.3,698.0L980.7,702.7L977.1,703.7L978.4,707.2L975.0,709.9L967.3,709.3L960.8,707.9L957.2,709.3M978.4,707.2L984.1,706.5L985.1,708.2L987.7,712.3L994.4,714.7L999.9,715.7L999.1,721.0L994.9,724.0M968.1,676.4L973.7,670.5L977.6,666.9L973.7,663.6L973.7,655.3L971.2,649.7L973.7,646.6L969.9,643.0L970.9,640.6L976.1,638.5M970.9,640.6L968.6,636.2L963.4,637.6L962.6,639.9L957.5,641.7L951.3,639.4L949.4,640.6L956.9,645.7L957.7,650.5L958.8,654.8M949.4,640.6L943.0,643.0L939.4,645.3L936.0,653.1L933.7,657.0L931.6,659.9L927.5,664.0L927.7,673.3L928.8,677.6L926.7,681.0L925.2,682.6M1003.5,741.8L1008.6,743.0L1012.0,747.3L1010.7,752.4L1012.0,754.8L1005.8,755.1L999.6,756.0L994.4,756.0L991.1,757.5L989.8,758.7L989.0,758.7M1005.8,755.1L1002.7,761.9L996.5,766.0L989.3,768.6L988.2,768.0M989.3,762.5L990.5,763.6L988.7,766.2L986.9,766.8M988.2,768.0L988.0,771.4L986.7,777.1M986.7,777.4L989.3,777.9L993.1,775.7L991.8,771.4L997.0,770.0L997.5,769.4L996.5,766.0M997.5,769.4L1004.8,772.6L1011.7,777.9L1016.4,778.2L1019.0,778.5L1021.3,779.9M1019.0,778.5L1017.7,775.7L1019.5,775.4L1020.3,775.7M1012.0,754.8L1013.8,758.4L1015.6,761.0L1013.8,764.2L1015.1,767.1L1019.0,769.1L1019.8,772.8L1021.6,775.1L1022.6,774.8M1012.0,747.3L1016.4,749.7L1020.3,747.6L1022.6,751.2M999.6,735.8L1006.1,736.5L1011.2,738.0L1016.1,740.5L1019.8,742.7L1021.8,740.5M1016.1,740.5L1016.4,743.0L1012.5,742.4L1008.6,743.0M1012.5,742.4L1013.8,744.5L1016.4,747.9L1016.4,749.7M1035.5,754.5L1041.0,752.1L1044.3,751.8L1049.5,753.9L1054.4,756.6L1054.4,759.5L1052.6,764.2L1053.6,771.4L1055.9,772.0L1053.6,776.2L1058.5,780.7L1059.6,784.1L1056.5,785.8L1055.4,789.1M1053.6,776.2L1061.6,777.4L1067.6,776.0L1068.6,772.3L1075.3,770.3L1077.1,765.7L1080.0,763.3L1081.0,757.8L1087.5,755.7L1089.8,754.8M1054.4,759.5L1059.0,760.1L1062.9,757.5L1068.1,754.2L1071.5,754.8L1075.8,753.6L1078.4,751.8L1081.0,752.7L1081.0,756.3L1085.7,754.2L1089.8,754.8M1068.1,754.2L1062.9,749.7L1057.5,746.4L1053.9,742.7L1051.3,739.6L1047.7,737.7L1043.5,742.4L1041.0,742.4L1035.8,739.3L1031.9,740.8M1041.0,742.4L1041.0,730.8L1047.4,729.2L1053.9,733.0L1056.5,735.5L1064.0,734.9L1067.1,737.1L1066.8,740.2L1072.0,743.0L1077.1,739.6L1079.7,739.3M1023.4,726.6L1021.6,722.7L1017.7,721.0L1016.4,719.4L1019.0,713.4L1022.1,712.3L1027.5,708.6L1035.8,711.0L1040.2,712.3L1047.4,711.0L1055.2,709.9L1051.3,706.5L1055.2,700.5L1064.2,699.5L1072.5,697.0L1079.7,699.8L1086.2,700.5L1093.9,699.8L1097.6,703.0L1103.0,711.7L1112.0,711.0L1117.2,715.7L1121.9,717.1M1103.5,737.4L1095.2,737.4L1088.0,736.5L1086.2,738.7L1079.7,739.3L1078.4,742.1L1084.9,743.9L1081.8,746.1L1078.4,746.4M1086.7,748.2L1081.5,747.9L1078.4,746.4L1075.3,743.9L1073.3,747.6L1070.4,748.8L1073.0,751.8L1071.5,754.8M1121.9,717.1L1127.5,713.0L1134.0,712.0L1141.8,714.4L1149.5,707.5L1151.8,707.2L1159.9,709.6L1160.6,713.0L1172.0,713.4L1176.7,716.7L1182.6,717.1L1192.2,713.7L1197.8,715.0M1157.8,799.2L1154.9,802.4L1149.5,804.0L1148.0,807.2L1151.1,813.6L1150.0,816.5L1152.6,820.5L1153.4,825.0L1151.1,829.7M1154.9,802.4L1156.2,804.6L1158.0,804.6L1157.3,809.4L1160.1,808.0L1163.0,807.5L1166.8,810.2L1167.1,813.1L1169.2,815.0L1168.9,818.1L1162.4,818.4L1161.1,820.5L1162.2,825.2M1160.4,796.7L1162.4,800.5L1166.6,801.9L1165.0,804.6L1168.1,807.2L1171.7,811.2L1173.8,814.4L1174.1,817.3L1174.1,823.6L1170.2,825.2L1169.7,827.1L1166.3,828.6M1168.9,818.1L1171.5,817.9L1174.1,817.3M1160.1,839.6L1157.5,840.6L1154.9,838.8M1006.6,812.8L1007.9,810.2L1013.0,810.2L1017.7,811.2L1020.8,808.0L1030.6,805.9L1033.5,812.3M1030.6,805.9L1038.4,803.2L1040.2,797.8L1038.9,795.9L1032.2,795.4L1029.6,791.8L1028.8,790.7M1040.2,797.8L1041.0,792.4L1042.0,789.9M1027.5,790.2L1028.8,790.7M1227.8,750.6L1224.5,751.5L1222.1,753.3M1175.9,799.2L1172.0,797.8L1168.4,794.3L1163.7,796.2L1160.4,796.7M1160.4,796.7L1159.1,800.0L1157.8,799.2M1157.8,799.2L1154.7,798.6L1152.6,797.3L1153.4,795.1L1151.3,791.8L1148.5,792.6L1148.7,789.1L1151.3,786.9L1151.3,782.4L1148.0,780.5M1148.0,780.5L1144.9,777.4L1140.7,777.7L1135.3,781.6L1133.2,781.9M1133.2,781.9L1129.9,781.0L1125.7,783.3M1125.7,783.3L1125.5,781.3L1123.9,781.6M1123.9,781.6L1118.5,781.3L1113.8,779.1L1108.9,775.4L1105.6,775.1M1105.6,775.1L1100.4,772.0L1099.6,768.6L1100.9,767.1L1099.9,763.3L1097.3,759.8M1097.3,759.8L1092.6,758.4L1089.8,754.8M1086.7,748.2L1090.1,750.9L1089.8,754.8M1103.5,737.4L1097.8,743.3L1092.6,745.1L1087.0,746.7L1086.7,748.2M1121.9,717.1L1118.0,719.7L1117.2,724.0L1110.7,723.7L1108.9,729.2L1103.5,730.8L1103.5,737.4M1121.9,717.1L1123.7,719.4L1130.1,722.7L1131.4,729.8L1137.9,731.1L1142.8,733.3L1145.4,738.0L1156.8,738.4L1167.6,741.5L1174.1,739.0L1181.6,738.0L1185.4,734.9L1185.4,730.8L1190.9,731.1L1197.3,726.6L1205.6,725.3L1201.2,721.0L1195.5,722.0L1197.8,715.0M1197.8,715.0L1201.0,716.0L1204.6,712.7L1208.2,705.8L1206.4,703.0L1215.4,702.3L1220.6,704.1L1225.8,713.4L1226.0,715.0L1233.5,718.1L1234.8,722.0L1245.2,719.7L1240.2,730.5L1235.6,731.1L1235.1,737.1L1233.8,739.0L1234.0,739.3M1233.8,739.0L1231.5,739.0L1227.1,740.2L1224.2,740.8L1222.4,743.0L1217.8,746.4M1072.5,793.2L1079.7,791.3L1077.1,787.7L1078.2,781.3L1083.3,779.1L1087.5,774.3L1088.8,770.6L1090.8,769.1L1087.5,766.5L1087.0,763.3L1088.8,761.3L1092.6,758.4L1097.3,759.8M1105.6,775.1L1103.2,779.1L1111.5,783.0L1116.7,784.9L1123.9,785.8L1123.9,781.6M1125.7,783.3L1126.3,784.7L1134.0,784.7L1133.2,781.9M1135.6,798.1L1137.1,797.3L1137.6,792.4L1141.0,788.8L1142.3,785.5L1146.9,783.5L1148.0,780.5M1126.5,798.4L1126.0,794.6L1124.2,791.0L1124.7,786.0L1128.3,786.9L1128.3,789.1L1135.0,789.6L1134.0,792.4L1131.9,793.7L1133.2,795.4L1135.6,798.1L1134.8,801.1M1260.7,862.3L1260.7,879.2M1179.5,850.4L1183.1,853.0L1188.3,852.0L1192.4,851.7L1195.3,847.8L1195.3,844.5L1199.9,844.7M1191.1,843.7L1192.9,845.3L1194.2,842.9M1217.0,880.0L1219.3,879.4L1219.3,878.1" fill="none" stroke="#666" stroke-width="0.8"/>
    <path d="M1217.8,746.4L1212.8,747.3L1209.7,750.0L1211.5,744.8L1209.0,743.6L1205.1,747.0L1200.7,749.4L1202.5,752.4L1203.8,754.8L1208.4,753.0L1212.8,754.2L1209.0,756.6L1205.1,760.4L1207.7,765.7L1211.0,770.6L1211.3,773.1L1207.7,774.8L1211.5,776.2L1210.3,780.5L1206.4,785.2L1203.8,789.1L1201.2,791.3L1197.8,794.3L1191.6,796.7L1188.3,797.8L1183.1,799.4L1181.3,802.4L1179.8,799.2L1175.9,799.2L1172.0,797.8L1168.4,794.3L1163.7,796.2L1160.4,796.7L1159.1,800.0L1157.8,799.2L1154.7,798.6L1152.6,797.3L1153.4,795.1L1151.3,791.8L1148.5,792.6L1148.7,789.1L1151.3,786.9L1151.3,782.4L1148.0,780.5L1144.9,777.4L1140.7,777.7L1135.3,781.6L1133.2,781.9L1129.9,781.0L1125.7,783.3L1125.5,781.3L1123.9,781.6L1118.5,781.3L1113.8,779.1L1108.9,775.4L1105.6,775.1L1100.4,772.0L1099.6,768.6L1100.9,767.1L1099.9,763.3L1097.3,759.8L1092.6,758.4L1089.8,754.8L1090.1,750.9L1086.7,748.2L1087.0,746.7L1092.6,745.1L1097.8,743.3L1103.5,737.4L1103.5,730.8L1108.9,729.2L1110.7,723.7L1117.2,724.0L1118.0,719.7L1121.9,717.1L1123.7,719.4L1130.1,722.7L1131.4,729.8L1137.9,731.1L1142.8,733.3L1145.4,738.0L1156.8,738.4L1167.6,741.5L1174.1,739.0L1181.6,738.0L1185.4,734.9L1185.4,730.8L1190.9,731.1L1197.3,726.6L1205.6,725.3L1201.2,721.0L1195.5,722.0L1197.8,715.0L1201.0,716.0L1204.6,712.7L1208.2,705.8L1206.4,703.0L1215.4,702.3L1220.6,704.1L1225.8,713.4L1226.0,715.0L1233.5,718.1L1234.8,722.0L1245.2,719.7L1240.2,730.5L1235.6,731.1L1235.1,737.1L1233.8,739.0L1231.5,739.0L1227.1,740.2L1224.2,740.8L1222.4,743.0L1217.8,746.4ZM1177.2,805.1L1180.5,802.9L1183.1,804.0L1180.5,807.5L1177.2,807.2Z" fill="#43a047" stroke="#3b8f3f" stroke-width="0.8"/>
    <path d="M1126.5,798.4L1123.7,798.9L1121.1,801.3L1119.8,803.2L1116.4,804.6L1113.3,807.8L1108.9,812.0L1105.6,814.2L1103.5,816.5L1103.2,820.5L1102.5,825.7L1102.5,828.9L1100.4,831.5L1098.3,832.5L1096.5,834.6L1093.9,832.3L1092.1,826.5L1089.5,821.8L1088.3,817.1L1086.2,812.6L1084.4,805.9L1084.1,800.5L1083.6,797.8L1082.3,800.5L1078.4,801.1L1074.6,797.3L1077.1,795.6L1073.8,794.3L1072.5,793.2L1079.7,791.3L1077.1,787.7L1078.2,781.3L1083.3,779.1L1087.5,774.3L1088.8,770.6L1090.8,769.1L1087.5,766.5L1087.0,763.3L1088.8,761.3L1097.3,759.8L1099.9,763.3L1100.9,767.1L1099.6,768.6L1100.4,772.0L1105.6,775.1L1103.2,779.1L1111.5,783.0L1116.7,784.9L1123.9,785.8L1123.9,781.6L1125.5,781.3L1125.7,783.3L1126.3,784.7L1134.0,784.7L1133.2,781.9L1135.3,781.6L1140.7,777.7L1144.9,777.4L1148.0,780.5L1146.9,783.5L1142.3,785.5L1141.0,788.8L1137.6,792.4L1137.1,797.3L1135.6,798.1L1133.2,795.4L1131.9,793.7L1134.0,792.4L1135.0,789.6L1128.3,789.1L1128.3,786.9L1124.7,786.0L1124.2,791.0L1126.0,794.6L1126.5,798.4Z" fill="#43a047" stroke="#3b8f3f" stroke-width="0.8"/>
    <path d="M578.8,717.7L579.6,719.4L579.6,723.3L578.3,720.4L573.9,719.7L575.7,726.6L575.7,730.8L574.4,737.1L575.4,740.2L574.9,745.1L576.5,749.4L579.6,753.0L580.9,756.0L583.4,759.8L584.7,762.8L590.2,764.8L593.0,767.1L593.5,768.6L599.7,768.0L609.3,772.0L616.5,772.0L616.5,770.6L620.9,770.6L626.1,776.8L630.0,778.5L631.3,776.2L635.1,776.8L639.0,782.7L644.7,786.9L645.5,781.9L650.6,778.5L653.2,776.8L658.4,776.8L662.3,777.9L665.1,778.2L666.1,774.8L671.3,774.5L675.2,776.2L679.1,775.7L682.2,778.5L682.4,782.4L684.8,786.3L686.6,789.4L688.6,788.8L689.2,784.7L687.9,780.2L685.8,774.3L687.3,769.7L691.5,766.5L694.6,764.5L697.9,762.2L700.5,759.8L699.8,755.4L701.0,752.4L702.3,750.0L704.4,747.9L704.9,744.8L705.7,743.6L711.4,742.1L715.3,740.8L713.2,738.4L714.7,735.2L717.8,734.0L723.0,731.7L723.0,730.8L720.9,728.2L720.9,724.3L719.7,723.3L717.3,723.0L715.3,725.9L713.2,729.5L711.4,730.8L702.3,730.8L698.5,733.3L691.5,735.8L692.0,737.7L683.0,741.1L681.4,739.6L683.2,737.1L683.0,729.8L680.4,728.2L677.0,725.0L667.4,720.4L664.9,721.0L658.4,720.0L651.7,718.7L650.1,717.7L578.8,717.7ZM531.7,638.1L524.0,636.2L513.6,634.4L503.3,632.5L491.4,630.1L482.6,633.4L474.9,639.9L466.3,643.5L472.3,646.6L477.5,649.7L478.7,653.1L472.3,651.8L465.8,653.1L461.7,655.7L466.3,659.9L474.9,660.3L480.0,660.3L480.0,663.2L474.9,665.7L470.5,666.5L467.1,669.3L468.4,672.5L471.0,676.4L477.5,678.3L478.0,683.3L485.2,683.7L489.1,683.3L486.5,688.9L481.3,692.6L476.2,695.2L470.2,698.8L474.9,698.0L480.0,696.2L486.5,693.3L491.7,689.7L497.4,684.8L499.4,680.3L503.3,675.2L508.5,673.7L505.9,675.2L503.8,681.0L508.5,680.7L512.4,677.2L517.5,674.5L522.7,677.2L529.2,678.3L534.8,679.5L540.8,683.3L546.0,682.2L549.8,686.0L553.7,691.5L556.3,695.2L559.4,698.0L560.2,693.3L555.0,689.7L551.1,684.1L546.0,679.5L540.8,682.2L536.9,678.3L531.7,677.2L531.7,638.1ZM502.0,687.8L496.8,689.7L499.4,686.0L503.3,685.2ZM469.7,698.4L473.6,697.7L473.6,697.0L470.2,697.1ZM462.5,703.0L466.3,701.2L465.8,700.5L462.2,702.0ZM463.8,678.0L467.6,678.0L467.6,679.1L464.0,679.1ZM457.8,665.7L459.9,665.7L459.9,664.4L457.8,664.0ZM493.0,805.4L495.6,804.6L495.0,802.7L493.2,802.9ZM491.2,801.1L493.0,801.3L492.2,800.5ZM487.3,799.2L488.6,799.7L488.1,798.6ZM483.1,797.8L484.4,798.1L484.2,797.3ZM1382.9,665.3L1387.8,666.1L1388.1,664.0L1382.9,663.6ZM1379.0,677.2L1381.4,677.2L1380.6,676.0L1379.0,676.0ZM1342.1,704.8L1344.4,704.8L1344.4,704.1L1342.1,704.1ZM1365.6,708.6L1369.7,708.9L1370.0,707.5L1366.1,707.5ZM1373.1,707.4L1375.9,707.2L1375.9,706.2L1373.4,706.5ZM1388.9,703.7L1391.5,702.7L1391.5,702.0L1388.9,703.0Z" fill="url(#hatch)" stroke="#2f2f2f" stroke-width="1.5"/>
  </g>
</svg>

<div id="tip" class="abs">Country : United States<br>Apdex Score : 1<br>Avg. Response Time (ms) : 930<br>Page Views : 38<br>Throughput(cpm) : 0.06<br>Error Count : 19</div>
</div>
</body>
</html>
